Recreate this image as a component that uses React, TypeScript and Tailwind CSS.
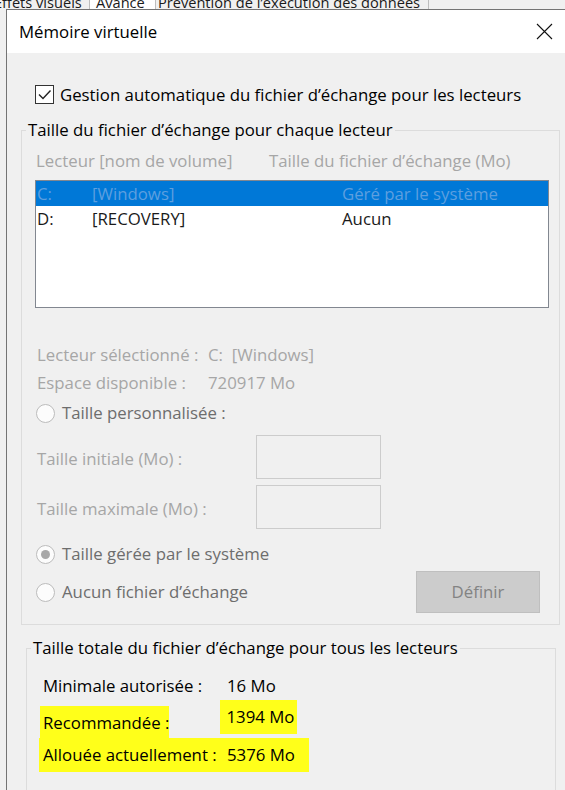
import React from 'react';

const font = { fontFamily: '"Open Sans", "Noto Sans", sans-serif' };

function Radio({ checked = false }: { checked?: boolean }) {
  return (
    <span className="flex h-[19px] w-[19px] flex-shrink-0 items-center justify-center rounded-full border border-[#bcbcbc] bg-[#fcfcfc]">
      {checked && <span className="h-[9px] w-[9px] rounded-full bg-[#a8a8a8]" />}
    </span>
  );
}

function Highlight({ children, className }: { children: React.ReactNode; className?: string }) {
  return <span className={`whitespace-nowrap bg-[#ffff1a] ${className ?? ''}`}>{children}</span>;
}

export default function App() {
  return (
    <div
      className="flex h-[790px] w-[565px] flex-col overflow-hidden bg-[#f0f0f0] text-[16.8px] text-black"
      style={font}
    >
      {/* parent dialog tab strip, cropped */}
      <div className="flex h-[9px] flex-shrink-0 overflow-hidden bg-[#f0f0f0] text-[14.6px] leading-[20px] text-[#1a1a1a]">
        <div className="-mt-[8px] flex whitespace-nowrap">
          <span className="-ml-[6px] w-[96px] overflow-hidden border-r border-[#bdbdbd]">Effets visuels</span>
          <span className="w-[66px] overflow-hidden border-r border-[#bdbdbd] bg-white pl-[6px]">Avancé</span>
          <span className="w-[273px] overflow-hidden border-r border-[#bdbdbd] pl-[2px]">
            Prévention de l’exécution des données
          </span>
        </div>
      </div>

      <div className="ml-[6px] flex flex-1 flex-col border-l border-t border-[#747474] bg-[#f0f0f0]">
        {/* title bar */}
        <div className="flex h-[43px] flex-shrink-0 items-center justify-between bg-white pl-[12px] pr-[11px]">
          <span>Mémoire virtuelle</span>
          <svg width="17" height="17" viewBox="0 0 17 17" className="mr-[1px]">
            <path d="M1 1 L16 16 M16 1 L1 16" stroke="#111" strokeWidth="1.1" fill="none" />
          </svg>
        </div>

        {/* auto checkbox */}
        <div className="ml-[28px] mt-[32px] flex h-[19px] items-center gap-[6px]">
          <span className="flex h-[19px] w-[19px] flex-shrink-0 items-center justify-center border border-[#333] bg-white">
            <svg width="15" height="15" viewBox="0 0 15 15">
              <path d="M2 7.5 L6 11.5 L13.5 3.5" stroke="#222" strokeWidth="1.4" fill="none" />
            </svg>
          </span>
          <span className="whitespace-nowrap leading-[20px]">
            Gestion automatique du fichier d’échange pour les lecteurs
          </span>
        </div>

        {/* per-drive group */}
        <fieldset className="ml-[14px] mt-[16px] w-[539px] border border-[#dcdcdc] pb-[11px]">
          <legend className="ml-[4px] whitespace-nowrap px-[2px] leading-[20px]">
            Taille du fichier d’échange pour chaque lecteur
          </legend>

          <div className="ml-[14px] mt-[11px] flex h-[20px] items-center whitespace-nowrap leading-[20px] text-[#a6a6a6]">
            <span className="w-[233px]">Lecteur [nom de volume]</span>
            <span>Taille du fichier d’échange (Mo)</span>
          </div>

          <div className="ml-[13px] mt-[9px] h-[128px] w-[514px] border border-[#828790] bg-white">
            <div className="flex h-[25px] items-center bg-[#0078d7] pl-[1px] text-[#5d9fdf]">
              <span className="w-[55px]">C:</span>
              <span className="w-[250px]">[Windows]</span>
              <span>Géré par le système</span>
            </div>
            <div className="flex h-[26px] items-center pl-[1px] text-[#1a1a1a]">
              <span className="w-[55px]">D:</span>
              <span className="w-[250px]">[RECOVERY]</span>
              <span>Aucun</span>
            </div>
          </div>

          <div className="ml-[15px] mt-[33px] flex h-[28px] items-center whitespace-nowrap text-[#a6a6a6]">
            <span className="w-[171px]">Lecteur sélectionné :</span>
            <span>C:&nbsp;&nbsp;[Windows]</span>
          </div>
          <div className="ml-[15px] flex h-[28px] items-center whitespace-nowrap text-[#a6a6a6]">
            <span className="w-[171px]">Espace disponible :</span>
            <span>720917 Mo</span>
          </div>
          <div className="ml-[14px] mt-[1px] flex h-[30px] items-center gap-[7px] text-[#6d6d6d]">
            <Radio />
            <span>Taille personnalisée :</span>
          </div>

          <div className="ml-[15px] mt-[7px] flex h-[44px] items-center text-[#a6a6a6]">
            <span className="w-[219px] whitespace-nowrap pt-[3px]">Taille initiale (Mo) :</span>
            <span className="h-[44px] w-[125px] border border-[#cccccc] bg-[#f0f0f0]" />
          </div>
          <div className="ml-[15px] mt-[6px] flex h-[44px] items-center text-[#a6a6a6]">
            <span className="w-[219px] whitespace-nowrap pt-[3px]">Taille maximale (Mo) :</span>
            <span className="h-[44px] w-[125px] border border-[#cccccc] bg-[#f0f0f0]" />
          </div>

          <div className="ml-[14px] mt-[10px] flex h-[30px] items-center gap-[7px] text-[#6d6d6d]">
            <Radio checked />
            <span>Taille gérée par le système</span>
          </div>
          <div className="ml-[14px] mr-[19px] mt-[2px] flex h-[42px] items-center text-[#6d6d6d]">
            <Radio />
            <span className="ml-[7px] flex-1">Aucun fichier d’échange</span>
            <span className="flex h-[42px] w-[124px] items-center justify-center border border-[#bfbfbf] bg-[#cccccc] text-[#838383]">
              Définir
            </span>
          </div>
        </fieldset>

        {/* total group */}
        <fieldset className="ml-[19px] mt-[13px] w-[530px] border border-[#dcdcdc] pb-[20px]">
          <legend className="ml-[4px] whitespace-nowrap px-[2px] leading-[20px]">
            Taille totale du fichier d’échange pour tous les lecteurs
          </legend>

          <div className="ml-[16px] mt-[13px] flex h-[30px] items-center whitespace-nowrap">
            <span className="w-[184px]">Minimale autorisée :</span>
            <span>16 Mo</span>
          </div>
          <div className="ml-[13px] mt-[5px] flex h-[30px] items-center">
            <Highlight className="-mb-[3px] py-[4px] pl-[3px] pr-[0px]">Recommandée :</Highlight>
            <Highlight className="-mt-[8px] ml-[51px] py-[4px] pl-[6px] pr-[3px]">1394 Mo</Highlight>
          </div>
          <div className="ml-[12px] mt-[4px] flex h-[30px] items-center">
            <Highlight className="flex py-[4px] pl-[4px] pr-[14px]">
              <span className="w-[184px]">Allouée actuellement :</span>
              <span>5376 Mo</span>
            </Highlight>
          </div>
        </fieldset>
      </div>
    </div>
  );
}
